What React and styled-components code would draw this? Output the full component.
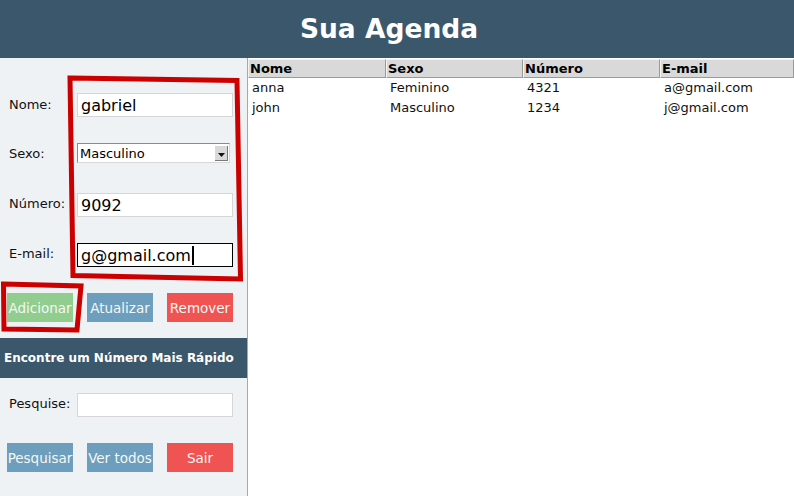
import React from "react";
import styled, { createGlobalStyle } from "styled-components";

const GlobalStyle = createGlobalStyle`
  html, body {
    margin: 0;
    padding: 0;
    background: #ffffff;
    font-family: "DejaVu Sans", "Liberation Sans", sans-serif;
  }
`;

const Page = styled.div`
  position: relative;
  width: 794px;
  height: 496px;
  overflow: hidden;
  display: flex;
  flex-direction: column;
  background: #ffffff;
`;

const TitleBar = styled.div`
  height: 58px;
  background: #3b576c;
  display: flex;
  align-items: center;
  justify-content: center;
  color: #ffffff;
  font-size: 26.5px;
  font-weight: bold;
  padding-right: 16px;
  padding-bottom: 2px;
  box-sizing: border-box;
`;

const Body = styled.div`
  flex: 1;
  display: flex;
`;

const Side = styled.div`
  width: 247px;
  background: #eef2f5;
  border-right: 1px solid #a8a8a8;
  display: flex;
  flex-direction: column;
`;

const Form = styled.div`
  padding-top: 22px;
  display: flex;
  flex-direction: column;
`;

const Row = styled.div`
  height: ${(p) => p.$h || 50}px;
  display: flex;
  align-items: center;
`;

const Label = styled.label`
  width: 77px;
  padding-left: 9px;
  box-sizing: border-box;
  font-size: 13px;
  color: #111;
  margin-top: ${(p) => (p.$up ? -3 : -1)}px;
`;

const Entry = styled.div`
  width: 156px;
  height: 24px;
  box-sizing: border-box;
  background: #ffffff;
  border: 1px solid ${(p) => (p.$focus ? "#000000" : "#d6d6d6")};
  font-size: 16px;
  color: #000;
  display: flex;
  align-items: center;
  padding-left: 3px;
  padding-top: 1px;
`;

const Caret = styled.span`
  display: inline-block;
  width: 2px;
  height: 19px;
  background: #000;
  margin-left: 1px;
`;

const Combo = styled.div`
  width: 153px;
  height: 20px;
  margin-top: -4px;
  box-sizing: border-box;
  background: #ffffff;
  border-top: 1px solid #8a8a8a;
  border-left: 1px solid #8a8a8a;
  border-right: 1px solid #d8d8d8;
  border-bottom: 1px solid #d8d8d8;
  display: flex;
  align-items: center;
  justify-content: space-between;
  font-size: 13px;
  color: #000;
  padding-left: 2px;
`;

const ComboArrow = styled.div`
  width: 13px;
  height: 15px;
  margin-right: 1px;
  background: #d9d9d9;
  border-right: 1px solid #7a7a7a;
  border-bottom: 1px solid #7a7a7a;
  box-sizing: border-box;
  display: flex;
  align-items: flex-end;
  justify-content: center;
  padding-bottom: 3px;
`;

const ButtonRow = styled.div`
  display: flex;
  gap: 14px;
  padding-left: 7px;
  margin-top: ${(p) => p.$top}px;
`;

const Btn = styled.div`
  width: 66px;
  height: 29px;
  background: ${(p) => p.$bg};
  color: #f4f8f4;
  font-size: 13.5px;
  display: flex;
  align-items: center;
  justify-content: center;
  white-space: nowrap;
`;

const Section = styled.div`
  margin-top: 16px;
  height: 40px;
  background: #3b576c;
  color: #ffffff;
  font-size: 12px;
  font-weight: bold;
  display: flex;
  align-items: center;
  padding-left: 4px;
  white-space: nowrap;
`;

const TableArea = styled.div`
  flex: 1;
  background: #ffffff;
  padding-top: 1px;
`;

const Grid = styled.div`
  display: grid;
  grid-template-columns: 138px 137px 137px 1fr;
`;

const Head = styled.div`
  height: 19px;
  box-sizing: border-box;
  background: #d9d9d9;
  border-top: 1px solid #f4f4f4;
  border-left: 1px solid #f4f4f4;
  border-right: 1px solid #9a9a9a;
  border-bottom: 1px solid #9a9a9a;
  font-size: 13px;
  font-weight: bold;
  color: #000;
  padding-left: 1px;
  display: flex;
  align-items: center;
`;

const Cell = styled.div`
  height: 20px;
  font-size: 13px;
  color: #111;
  padding-left: 4px;
  padding-bottom: 2px;
  box-sizing: border-box;
  display: flex;
  align-items: center;
`;

const Marks = styled.svg`
  position: absolute;
  left: 0;
  top: 0;
  pointer-events: none;
`;

const contacts = [
  { nome: "anna", sexo: "Feminino", numero: "4321", email: "a@gmail.com" },
  { nome: "john", sexo: "Masculino", numero: "1234", email: "j@gmail.com" },
];

export default function App() {
  return (
    <>
      <GlobalStyle />
      <Page>
        <TitleBar>Sua Agenda</TitleBar>
        <Body>
          <Side>
            <Form>
              <Row>
                <Label>Nome:</Label>
                <Entry>gabriel</Entry>
              </Row>
              <Row>
                <Label $up>Sexo:</Label>
                <Combo>
                  Masculino
                  <ComboArrow>
                    <svg width="7" height="4" viewBox="0 0 7 4">
                      <path d="M0 0 L7 0 L3.5 4 Z" fill="#111" />
                    </svg>
                  </ComboArrow>
                </Combo>
              </Row>
              <Row>
                <Label $up>Número:</Label>
                <Entry>9092</Entry>
              </Row>
              <Row>
                <Label $up>E-mail:</Label>
                <Entry $focus>
                  g@gmail.com
                  <Caret />
                </Entry>
              </Row>
            </Form>
            <ButtonRow $top={13}>
              <Btn $bg="#90cd8f">Adicionar</Btn>
              <Btn $bg="#6e9ebd">Atualizar</Btn>
              <Btn $bg="#ef5452">Remover</Btn>
            </ButtonRow>
            <Section>Encontre um Número Mais Rápido</Section>
            <Row $h={24} style={{ marginTop: 15 }}>
              <Label $up>Pesquise:</Label>
              <Entry />
            </Row>
            <ButtonRow $top={26}>
              <Btn $bg="#6e9ebd">Pesquisar</Btn>
              <Btn $bg="#6e9ebd">Ver todos</Btn>
              <Btn $bg="#ef5452">Sair</Btn>
            </ButtonRow>
          </Side>
          <TableArea>
            <Grid>
              <Head>Nome</Head>
              <Head>Sexo</Head>
              <Head>Número</Head>
              <Head>E-mail</Head>
              {contacts.map((c) => (
                <React.Fragment key={c.nome}>
                  <Cell>{c.nome}</Cell>
                  <Cell>{c.sexo}</Cell>
                  <Cell>{c.numero}</Cell>
                  <Cell>{c.email}</Cell>
                </React.Fragment>
              ))}
            </Grid>
          </TableArea>
        </Body>
        <Marks width="794" height="496" viewBox="0 0 794 496">
          <path
            d="M70 78 L237 80.5 L240.5 279 L73 275.5 Z"
            fill="none"
            stroke="#cc0000"
            strokeWidth="5"
            strokeLinejoin="miter"
          />
          <path
            d="M3.5 284 L81 286 L77 330 L4 329 Z"
            fill="none"
            stroke="#cc0000"
            strokeWidth="5"
            strokeLinejoin="miter"
          />
        </Marks>
      </Page>
    </>
  );
}
